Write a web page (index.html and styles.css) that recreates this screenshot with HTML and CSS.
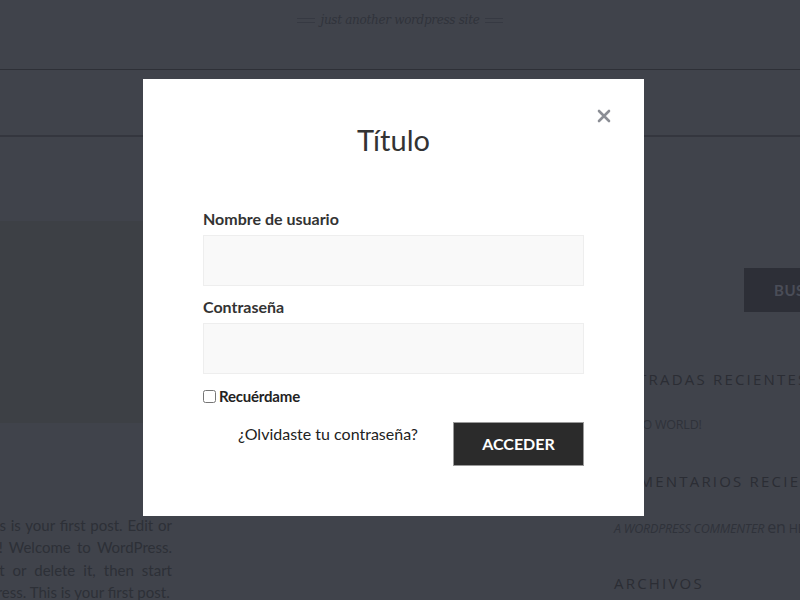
FILE: index.html
```html
<!DOCTYPE html>
<html lang="es">
<head>
    <meta charset="UTF-8">
    <meta name="viewport" content="width=device-width, initial-scale=1.0">
    <title>Acceder</title>
    <link rel="stylesheet" href="styles.css">
</head>
<body>

<div class="site">
    <header class="site-header">
        <p class="tagline"><span class="rule"></span>just another wordpress site<span class="rule"></span></p>
    </header>
    <nav class="site-nav"></nav>

    <div class="site-main">
        <div class="content">
            <div class="featured"></div>
            <p class="post-text">Welcome to WordPress. This is your first post. Edit or delete it, then start writing! Welcome to WordPress. This is your first post. Edit or delete it, then start writing! Welcome to WordPress. This is your first post.</p>
        </div>

        <aside class="sidebar">
            <div class="search-form">
                <span class="search-field"></span>
                <span class="search-btn">BUSCAR</span>
            </div>
            <h3 class="widget-title first">ENTRADAS RECIENTES</h3>
            <p class="widget-item">HELLO WORLD!</p>
            <h3 class="widget-title">COMENTARIOS RECIENTES</h3>
            <p class="widget-item"><em>A WORDPRESS COMMENTER</em> <span class="en">en</span> HELLO WORLD!</p>
            <h3 class="widget-title last">ARCHIVOS</h3>
        </aside>
    </div>
</div>

<div class="modal">
    <button class="modal-close" aria-label="Cerrar">
        <svg width="14" height="14" viewBox="0 0 14 14">
            <path d="M2 2 L12 12 M12 2 L2 12" stroke="#8b8e95" stroke-width="2.6" stroke-linecap="round"/>
        </svg>
    </button>
    <h2 class="modal-title">Título</h2>

    <form class="login-form">
        <label class="field-label">Nombre de usuario</label>
        <div class="field-input"></div>

        <label class="field-label second">Contraseña</label>
        <div class="field-input"></div>

        <label class="remember"><input type="checkbox"> Recuérdame</label>

        <div class="form-actions">
            <a class="lost-link">¿Olvidaste tu contraseña?</a>
            <span class="submit-btn">ACCEDER</span>
        </div>
    </form>
</div>

</body>
</html>
```

FILE: styles.css
```css
body {
    margin: 0;
    background-color: #40434b;
    font-family: 'Lato', sans-serif;
    overflow: hidden;
    width: 800px;
    height: 600px;
}

.site {
    width: 800px;
    height: 600px;
    overflow: hidden;
}

.site-header {
    height: 69px;
    border-bottom: 1px solid #2e3037;
}

.tagline {
    margin: 0;
    padding-top: 10px;
    display: flex;
    justify-content: center;
    align-items: center;
    gap: 6px;
    font-family: 'DejaVu Serif', serif;
    font-style: italic;
    font-size: 12px;
    line-height: 20px;
    letter-spacing: -0.3px;
    color: #30333b;
}

.tagline .rule {
    width: 18px;
    height: 3px;
    border-top: 1px solid #363942;
    border-bottom: 1px solid #363942;
}

.site-nav {
    height: 65px;
    border-bottom: 2px solid #34363e;
}

.site-main {
    display: flex;
}

.content {
    flex: none;
    width: 358px;
    margin-left: -186px;
}

.featured {
    margin-top: 84px;
    height: 202px;
    margin-left: 186px;
    margin-right: -100px;
    background-color: #3d4045;
}

.post-text {
    margin: 91px 0 0;
    font-size: 15px;
    line-height: 22.4px;
    text-align: justify;
    color: #2d3037;
}

.sidebar {
    margin-left: 442px;
    flex: none;
    width: 320px;
    font-family: 'Open Sans', sans-serif;
}

.search-form {
    margin-top: 131px;
    display: flex;
    height: 44px;
}

.search-field {
    flex: none;
    width: 130px;
}

.search-btn {
    flex: none;
    width: 120px;
    background-color: #2d2f37;
    color: #4a4d57;
    font-family: 'Lato', sans-serif;
    font-weight: 700;
    font-size: 15px;
    line-height: 44px;
    padding-left: 30px;
    letter-spacing: 0.5px;
}

.widget-title {
    margin: 37px 0 0;
    font-size: 15px;
    font-weight: 400;
    line-height: 20px;
    letter-spacing: 2.2px;
    color: #2b2d34;
    white-space: nowrap;
}

.widget-title.first {
    margin-top: 57px;
}

.widget-title.last {
    margin-top: 35px;
}

.widget-item {
    margin: 27px 0 0;
    font-size: 12.5px;
    line-height: 18px;
    color: #2f323a;
    white-space: nowrap;
    letter-spacing: -0.2px;
}

.widget-item .en {
    font-size: 16px;
}

/* modal */

.modal {
    position: absolute;
    left: 143px;
    top: 79px;
    width: 381px;
    padding: 43px 60px 50px;
    background-color: #fff;
}

.modal-close {
    position: absolute;
    top: 30px;
    right: 33px;
    padding: 0;
    border: none;
    background: none;
    width: 14px;
    height: 14px;
    display: flex;
}

.modal-title {
    margin: 0;
    text-align: center;
    font-size: 29px;
    font-weight: 400;
    line-height: 36px;
    color: #333;
}

.login-form {
    margin-top: 51px;
    display: flex;
    flex-direction: column;
}

.field-label {
    font-size: 16px;
    font-weight: 700;
    line-height: 20px;
    color: #333;
}

.field-label.second {
    margin-top: 11px;
}

.field-input {
    margin-top: 6px;
    height: 49px;
    background-color: #f9f9f9;
    border: 1px solid #eee;
}

.remember {
    margin-top: 12px;
    display: flex;
    align-items: center;
    gap: 3px;
    font-size: 15px;
    font-weight: 700;
    line-height: 20px;
    letter-spacing: -0.2px;
    color: #222;
}

.remember input {
    margin: 0;
    width: 13px;
    height: 13px;
}

.form-actions {
    margin-top: 16px;
    display: flex;
    align-items: flex-start;
}

.lost-link {
    flex: 1;
    text-align: center;
    padding-top: 2px;
    font-size: 16px;
    line-height: 20px;
    color: #222;
}

.submit-btn {
    width: 129px;
    height: 42px;
    line-height: 42px;
    text-align: center;
    background-color: #2b2b2b;
    border: 1px solid #9a9a9a;
    color: #fff;
    font-size: 16px;
    font-weight: 700;
}
```
